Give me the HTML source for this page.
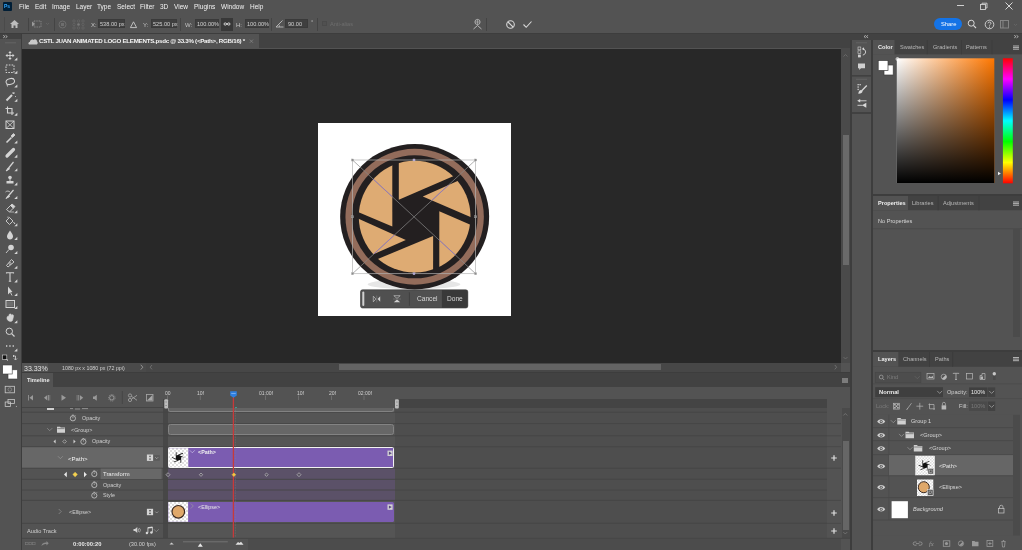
<!DOCTYPE html>
<html><head><meta charset="utf-8">
<style>
*{margin:0;padding:0;box-sizing:border-box}
html,body{width:1022px;height:550px;overflow:hidden;background:#535353;font-family:"Liberation Sans",sans-serif;color:#d6d6d6}
.a{position:absolute}
.t{position:absolute;white-space:nowrap;line-height:1;font-size:6.5px;will-change:transform}
</style></head><body>
<!-- menu bar -->
<div class="a" style="left:0;top:0;width:1022px;height:14px;background:#535353"></div>
<div class="a" style="left:3px;top:2px;width:9px;height:9px;background:#001e36;border-radius:1px"></div>
<div class="t" style="left:4px;top:4px;font-size:5px;color:#31a8ff;font-weight:bold">Ps</div>
<div class="t" style="left:19px;top:3.5px;color:#f2f2f2">File</div>
<div class="t" style="left:35px;top:3.5px;color:#f2f2f2">Edit</div>
<div class="t" style="left:51.5px;top:3.5px;color:#f2f2f2">Image</div>
<div class="t" style="left:76px;top:3.5px;color:#f2f2f2">Layer</div>
<div class="t" style="left:97px;top:3.5px;color:#f2f2f2">Type</div>
<div class="t" style="left:116.5px;top:3.5px;color:#f2f2f2">Select</div>
<div class="t" style="left:140px;top:3.5px;color:#f2f2f2">Filter</div>
<div class="t" style="left:160px;top:3.5px;color:#f2f2f2">3D</div>
<div class="t" style="left:174px;top:3.5px;color:#f2f2f2">View</div>
<div class="t" style="left:194px;top:3.5px;color:#f2f2f2">Plugins</div>
<div class="t" style="left:220.5px;top:3.5px;color:#f2f2f2">Window</div>
<div class="t" style="left:250px;top:3.5px;color:#f2f2f2">Help</div>

<!-- options bar -->
<div class="a" style="left:0;top:14.5px;width:1022px;height:1px;background:#454545"></div>
<div class="a" style="left:0;top:15px;width:1022px;height:18px;background:#535353"></div>
<div class="a" style="left:0;top:33px;width:1022px;height:1px;background:#3d3d3d"></div>


<!-- options content -->
<div class="a" style="left:3.5px;top:17px;width:1px;height:14px;background:#4a4a4a"></div>
<svg class="a" style="left:9px;top:19px" width="11" height="10" viewBox="0 0 11 10"><path d="M5.5 1 L10 5 H8.5 V9 H6.5 V6.5 H4.5 V9 H2.5 V5 H1 Z" fill="#bdbdbd"/></svg>
<div class="a" style="left:28px;top:18px;width:1px;height:13px;background:#444"></div>
<svg class="a" style="left:31px;top:19px" width="20" height="10" viewBox="0 0 20 10"><rect x="3" y="2" width="7" height="6" fill="none" stroke="#8a8a8a" stroke-width="0.9" stroke-dasharray="1.4 0.9"/><path d="M1 2.5 L4 5 L1 7.5Z" fill="#9a9a9a"/><path d="M15 4 L16.5 5.5 L18 4" fill="none" stroke="#6a6a6a" stroke-width="0.7"/></svg>
<div class="a" style="left:54px;top:18px;width:1px;height:13px;background:#444"></div>
<svg class="a" style="left:58px;top:20px" width="10" height="9" viewBox="0 0 10 9"><circle cx="4.5" cy="4.5" r="3.5" fill="none" stroke="#6e6e6e" stroke-width="1"/><rect x="3" y="3" width="3" height="3" fill="#6e6e6e"/></svg>
<svg class="a" style="left:72px;top:19px" width="13" height="11" viewBox="0 0 13 11"><g fill="none" stroke="#6a6a6a" stroke-width="0.6"><circle cx="2" cy="2" r="1.2"/><circle cx="6.5" cy="2" r="1.2"/><circle cx="11" cy="2" r="1.2"/><circle cx="2" cy="5.5" r="1.2"/><circle cx="11" cy="5.5" r="1.2"/><circle cx="2" cy="9" r="1.2"/><circle cx="6.5" cy="9" r="1.2"/><circle cx="11" cy="9" r="1.2"/></g><circle cx="6.5" cy="5.5" r="1.3" fill="#7a7a7a"/></svg>
<div class="t" style="left:91px;top:21.5px;font-size:6px;color:#c4c4c4">X:</div>
<div class="a" style="left:97.5px;top:19px;width:27px;height:9px;background:#3f3f3f;border:1px solid #3a3a3a"></div>
<div class="t" style="left:100px;top:21.8px;font-size:5.6px;color:#d0d0d0">538.00 px</div>
<svg class="a" style="left:129px;top:19.5px" width="9" height="9" viewBox="0 0 9 9"><path d="M4.5 1.8 L7.6 7.6 H1.4 Z" fill="none" stroke="#c8c8c8" stroke-width="0.9"/></svg>
<div class="t" style="left:143px;top:21.5px;font-size:6px;color:#c4c4c4">Y:</div>
<div class="a" style="left:150.5px;top:19px;width:26px;height:9px;background:#3f3f3f;border:1px solid #3a3a3a"></div>
<div class="t" style="left:153px;top:21.8px;font-size:5.6px;color:#d0d0d0">525.00 px</div>
<div class="a" style="left:180px;top:18px;width:1px;height:13px;background:#444"></div>
<div class="t" style="left:185px;top:21.5px;font-size:6px;color:#c4c4c4">W:</div>
<div class="a" style="left:194.5px;top:19px;width:24px;height:9px;background:#3f3f3f;border:1px solid #3a3a3a"></div>
<div class="t" style="left:196.5px;top:21.8px;font-size:5.6px;color:#d0d0d0">100.00%</div>
<div class="a" style="left:221px;top:18px;width:12px;height:12.5px;background:#383838"></div>
<svg class="a" style="left:223px;top:21px" width="8" height="6" viewBox="0 0 8 6"><path d="M4 3 C3 1.5 1 1.5 1 3 C1 4.5 3 4.5 4 3 C5 1.5 7 1.5 7 3 C7 4.5 5 4.5 4 3Z" fill="none" stroke="#e0e0e0" stroke-width="0.9"/></svg>
<div class="t" style="left:236px;top:21.5px;font-size:6px;color:#c4c4c4">H:</div>
<div class="a" style="left:244.5px;top:19px;width:24px;height:9px;background:#3f3f3f;border:1px solid #3a3a3a"></div>
<div class="t" style="left:246.5px;top:21.8px;font-size:5.6px;color:#d0d0d0">100.00%</div>
<div class="a" style="left:271px;top:18px;width:1px;height:13px;background:#444"></div>
<svg class="a" style="left:275px;top:19px" width="9" height="9" viewBox="0 0 9 9"><path d="M1 8 H8.5 M1 8 L7.5 1.5" fill="none" stroke="#bdbdbd" stroke-width="0.9"/><path d="M4.5 8 A3.5 3.5 0 0 0 3.8 5.5" fill="none" stroke="#bdbdbd" stroke-width="0.7"/></svg>
<div class="a" style="left:285px;top:19px;width:23px;height:9px;background:#3f3f3f;border:1px solid #3a3a3a"></div>
<div class="t" style="left:287.5px;top:21.8px;font-size:5.6px;color:#d0d0d0">90.00</div>
<div class="t" style="left:311px;top:20px;font-size:5.6px;color:#bdbdbd">&deg;</div>
<div class="a" style="left:316.5px;top:18px;width:1px;height:13px;background:#444"></div>
<div class="a" style="left:321.5px;top:20.5px;width:5px;height:5px;border:1px solid #4a4a4a;background:#505050"></div>
<div class="t" style="left:329.5px;top:21.5px;font-size:5.6px;color:#6e6e6e">Anti-alias</div>
<svg class="a" style="left:472px;top:18px" width="11" height="12" viewBox="0 0 11 12"><circle cx="5.5" cy="4" r="2.6" fill="none" stroke="#c0c0c0" stroke-width="0.8"/><path d="M3 4 H8 M5.5 1.5 V6.5" stroke="#c0c0c0" stroke-width="0.6"/><path d="M1.5 11 L5.5 7.5 L9.5 11" fill="none" stroke="#c0c0c0" stroke-width="0.9"/></svg>
<div class="a" style="left:485.5px;top:18px;width:1px;height:13px;background:#444"></div>
<svg class="a" style="left:505px;top:18.5px" width="11" height="11" viewBox="0 0 11 11"><circle cx="5.5" cy="5.5" r="3.8" fill="none" stroke="#d8d8d8" stroke-width="1.1"/><path d="M3 3 L8 8" stroke="#d8d8d8" stroke-width="1.1"/></svg>
<svg class="a" style="left:522px;top:18.5px" width="11" height="11" viewBox="0 0 11 11"><path d="M1.5 5.5 L4.2 8.3 L9.5 2.5" fill="none" stroke="#d8d8d8" stroke-width="1.1"/></svg>
<!-- window controls -->
<div class="a" style="left:956.5px;top:5px;width:7px;height:1px;background:#d0d0d0"></div>
<svg class="a" style="left:979px;top:1.5px" width="9" height="9" viewBox="0 0 9 9"><rect x="1.5" y="2.5" width="5" height="5" fill="none" stroke="#d0d0d0" stroke-width="0.9"/><path d="M3 2.5 V1.2 H8 V6 H6.5" fill="none" stroke="#d0d0d0" stroke-width="0.9"/></svg>
<svg class="a" style="left:1003.5px;top:1px" width="10" height="10" viewBox="0 0 10 10"><path d="M1.5 1.5 L8.5 8.5 M8.5 1.5 L1.5 8.5" stroke="#d8d8d8" stroke-width="1"/></svg>
<div class="a" style="left:934px;top:17.5px;width:28px;height:12.5px;background:#1473e6;border-radius:7px"></div>
<div class="t" style="left:940.5px;top:21.6px;font-size:5.8px;color:#fff">Share</div>
<svg class="a" style="left:967px;top:19px" width="10" height="10" viewBox="0 0 10 10"><circle cx="4.2" cy="4.2" r="3" fill="none" stroke="#d8d8d8" stroke-width="1"/><path d="M6.4 6.4 L9 9" stroke="#d8d8d8" stroke-width="1.1"/></svg>
<svg class="a" style="left:984px;top:18.5px" width="11" height="11" viewBox="0 0 11 11"><circle cx="5.5" cy="5.5" r="4.3" fill="none" stroke="#d8d8d8" stroke-width="0.9"/><path d="M4 4.3 C4 2.6 7 2.6 7 4.3 C7 5.3 5.5 5.3 5.5 6.6" fill="none" stroke="#d8d8d8" stroke-width="0.9"/><circle cx="5.5" cy="8.2" r="0.6" fill="#d8d8d8"/></svg>
<svg class="a" style="left:999px;top:19px" width="20" height="11" viewBox="0 0 20 11"><rect x="1.5" y="1.5" width="8" height="7.5" fill="none" stroke="#8a8a8a" stroke-width="0.9"/><path d="M4 1.5 V9" stroke="#8a8a8a" stroke-width="0.9"/><path d="M15 5 L16.5 6.5 L18 5" fill="none" stroke="#6a6a6a" stroke-width="0.7"/></svg>

<!-- toolbar -->
<div class="a" style="left:0;top:34px;width:22px;height:516px;background:#535353"></div>
<div class="a" style="left:0;top:34px;width:21px;height:5px;background:#424242"></div>
<div class="a" style="left:21px;top:34px;width:1px;height:516px;background:#3d3d3d"></div>


<svg class="a" style="left:0;top:0" width="22" height="550" viewBox="0 0 22 550">
<path d="M3.2 35.3 L5 36.6 L3.2 37.9 M5.5 35.3 L7.3 36.6 L5.5 37.9" fill="none" stroke="#d0d0d0" stroke-width="0.7"/>
<path d="M5 42.8 H16" stroke="#6a6a6a" stroke-width="0.8"/>
<g fill="none" stroke="#d4d4d4" stroke-width="1.1">
<!-- move -->
<path d="M10 52 V59 M6.5 55.5 H13.5" stroke-width="0.9"/>
<path d="M10 51 L8.3 53 H11.7Z M10 60 L8.3 58 H11.7Z M5.5 55.5 L7.5 53.8 V57.2Z M14.5 55.5 L12.5 53.8 V57.2Z" fill="#d4d4d4" stroke="none"/>
<path d="M15.6 60.0 L16.8 58.8 V60.0Z" fill="#c8c8c8"/>
<!-- marquee -->
<rect x="6" y="65" width="8" height="7.5" stroke-dasharray="1.6 1.2" stroke-width="1"/>
<path d="M15.6 73.2 L16.8 72.0 V73.2Z" fill="#c8c8c8"/>
<!-- lasso -->
<ellipse cx="10.3" cy="81.5" rx="4.3" ry="2.9" transform="rotate(-15 10.3 81.5)" stroke-width="1"/>
<path d="M7 84 L7.5 86.5" stroke-width="0.9"/>
<path d="M15.6 87.0 L16.8 85.8 V87.0Z" fill="#c8c8c8"/>
<!-- wand -->
<path d="M6.5 100.5 L12 95" stroke-width="2"/>
<path d="M13.5 92.5 V94 M12 93 H15 M15.5 96 V97" stroke-width="0.8"/>
<path d="M15.6 101.3 L16.8 100.1 V101.3Z" fill="#c8c8c8"/>
<!-- crop -->
<path d="M7.5 106.5 V113 H14 M5.5 108.5 H12 V115" stroke-width="1.1"/>
<path d="M15.6 115.2 L16.8 114.0 V115.2Z" fill="#c8c8c8"/>
<!-- frame -->
<rect x="6" y="121" width="8" height="7.5" stroke-width="1"/>
<path d="M6 121 L14 128.5 M14 121 L6 128.5" stroke-width="0.8"/>
<!-- eyedropper -->
<path d="M6.5 142.5 L11.5 137.5" stroke-width="1.6"/>
<path d="M11 136 L13.5 133.5 L15 135 L12.5 137.5Z" fill="#d4d4d4" stroke-width="0.8"/>
<path d="M15.6 143.0 L16.8 141.8 V143.0Z" fill="#c8c8c8"/>
<!-- healing -->
<path d="M7 156 L13.5 149.5" stroke-width="3.2" stroke-linecap="round"/>
<path d="M15.6 157.1 L16.8 155.9 V157.1Z" fill="#c8c8c8"/>
<!-- brush -->
<path d="M7 170 L13.5 162" stroke-width="1.2"/>
<path d="M6 171 L8.5 168 L9.5 169 Z" fill="#d4d4d4" stroke-width="1"/>
<path d="M15.6 170.8 L16.8 169.6 V170.8Z" fill="#c8c8c8"/>
<!-- stamp -->
<circle cx="10" cy="177.5" r="1.8" fill="#d4d4d4" stroke="none"/>
<path d="M10 179 V181" stroke-width="1"/>
<rect x="6.5" y="181" width="7" height="2.5" fill="#d4d4d4" stroke="none"/>
<path d="M15.6 184.9 L16.8 183.7 V184.9Z" fill="#c8c8c8"/>
<!-- history brush -->
<path d="M7 197.5 L13.5 190" stroke-width="1.2"/>
<path d="M6 198.5 L8.5 195.5 L9.5 196.5Z" fill="#d4d4d4" stroke-width="1"/>
<path d="M5.5 192 C7 190.5 9 191 10 192" stroke-width="0.8"/>
<path d="M15.6 198.5 L16.8 197.3 V198.5Z" fill="#c8c8c8"/>
<!-- eraser -->
<path d="M6.5 209.5 L10.5 205.5 L13.5 208 L9.5 212 Z" stroke-width="0.9"/>
<path d="M10.5 205.5 L12 204 L15 206.5 L13.5 208Z" fill="#d4d4d4" stroke-width="0.9"/>
<path d="M9.5 212 H14" stroke-width="0.7"/>
<path d="M15.6 212.7 L16.8 211.5 V212.7Z" fill="#c8c8c8"/>
<!-- bucket -->
<path d="M6 221 L9.5 217.5 L13 221 L9.5 224.5 Z" stroke-width="0.9"/>
<path d="M8 218 L8 216.5" stroke-width="0.8"/>
<path d="M13.5 222 L15 224" stroke-width="1"/>
<path d="M15.6 225.8 L16.8 224.6 V225.8Z" fill="#c8c8c8"/>
<!-- blur -->
<path d="M10 230.5 C8 233.5 7 235 7 236.5 C7 238.5 8.5 239.5 10 239.5 C11.5 239.5 13 238.5 13 236.5 C13 235 12 233.5 10 230.5Z" fill="#d4d4d4" stroke="none"/>
<path d="M15.6 239.4 L16.8 238.2 V239.4Z" fill="#c8c8c8"/>
<!-- dodge -->
<circle cx="11" cy="247.5" r="2.8" fill="#d4d4d4" stroke="none"/>
<path d="M9 249.5 L6 253" stroke-width="0.9"/>
<path d="M15.6 253.5 L16.8 252.3 V253.5Z" fill="#c8c8c8"/>
<!-- pen -->
<path d="M6.5 265.5 L11.5 259.5 L14 262 L8 267Z" stroke-width="0.9"/>
<circle cx="10" cy="263.5" r="1" stroke-width="0.7"/>
<path d="M15.6 268.2 L16.8 267.0 V268.2Z" fill="#c8c8c8"/>
<!-- type -->
<path d="M6.5 273.5 V272.7 H13.5 V273.5 M10 272.7 V281.3 M8.8 281.3 H11.2" stroke-width="1.1"/>
<path d="M15.6 281.9 L16.8 280.7 V281.9Z" fill="#c8c8c8"/>
<!-- path select -->
<path d="M8 286.5 L8 294.5 L10 292.5 L12.5 292 Z" fill="#d4d4d4" stroke="none"/>
<path d="M10.5 292.5 L12 295.5" stroke-width="0.9"/>
<path d="M15.6 295.5 L16.8 294.3 V295.5Z" fill="#c8c8c8"/>
<!-- rect -->
<rect x="6" y="300.5" width="8.5" height="7" stroke-width="1"/>
<rect x="7" y="301.5" width="6.5" height="5" fill="#6e6e6e" stroke="none"/>
<path d="M15.6 308.5 L16.8 307.3 V308.5Z" fill="#c8c8c8"/>
<!-- hand -->
<path d="M7 319 C6.5 316 9 315 9 317 V315 C9 313.5 11.5 313.5 11.5 315 V315.5 C12 314 14 314.5 13.5 316.5 L12.5 320.5 C11.5 322 8.5 322 7 319Z" fill="#d4d4d4" stroke-width="0.5"/>
<path d="M15.6 322.7 L16.8 321.5 V322.7Z" fill="#c8c8c8"/>
<!-- zoom -->
<circle cx="9.3" cy="331.3" r="3.2" stroke-width="1"/>
<path d="M11.7 333.7 L14.5 336.5" stroke-width="1.2"/>
<!-- more -->
<path d="M6 346 H7.3 M9.3 346 H10.6 M12.6 346 H13.9" stroke-width="1.3"/>
<path d="M15.6 351.0 L16.8 349.8 V351.0Z" fill="#c8c8c8"/>
</g>
<!-- default colors -->
<rect x="2.3" y="355" width="4.5" height="4.5" fill="#111" stroke="#d8d8d8" stroke-width="0.6"/>
<path d="M5.5 359.5 H7.5 V361" fill="none" stroke="#d8d8d8" stroke-width="0.6"/>
<path d="M13 356 H15.5 V359.5 M14 358.5 L15.5 360 L17 358.5 M13 356 L14 355 M13 356 L14 357" fill="none" stroke="#d8d8d8" stroke-width="0.8"/>
<rect x="8" y="369.8" width="9.5" height="9.2" fill="#fff" stroke="#3a3a3a" stroke-width="0.6"/>
<rect x="2.7" y="365" width="9.5" height="9" fill="#fff" stroke="#3a3a3a" stroke-width="0.6"/>
<rect x="5.2" y="386.3" width="9.2" height="6.5" fill="none" stroke="#c8c8c8" stroke-width="0.8"/>
<circle cx="9.8" cy="389.5" r="1.8" fill="none" stroke="#8a8a8a" stroke-width="0.9"/>
<rect x="8" y="399.5" width="6.5" height="4" fill="none" stroke="#c8c8c8" stroke-width="0.8"/>
<rect x="5.2" y="402" width="5.3" height="4.5" fill="none" stroke="#c8c8c8" stroke-width="0.8"/>
<path d="M15.6 407.0 L16.8 405.8 V407.0Z" fill="#c8c8c8"/>
</svg>

<!-- doc tab bar -->
<div class="a" style="left:22px;top:34px;width:828px;height:14px;background:#424242"></div>
<div class="a" style="left:22px;top:34px;width:236.5px;height:14px;background:#535353"></div>


<!-- doc tab content -->
<svg class="a" style="left:27.5px;top:37.5px" width="10" height="7" viewBox="0 0 10 7"><path d="M1.5 6.5 C0 6.5 0 4 1.8 4 C2 2 4 1 5.5 2 C6.5 0.5 9 1 9 3.5 C10 3.8 10 6.5 8.5 6.5 Z" fill="#c8c8c8"/></svg>
<div class="t" style="left:39px;top:37.9px;font-size:6.2px;font-weight:bold;letter-spacing:-0.27px;color:#f4f4f4">CSTL JUAN ANIMATED LOGO ELEMENTS.psdc @ 33.3% (&lt;Path&gt;, RGB/16) *</div>
<svg class="a" style="left:248px;top:38px" width="7" height="7" viewBox="0 0 7 7"><path d="M1.8 1.6 L5 4.8 M5 1.6 L1.8 4.8" stroke="#8a8a8a" stroke-width="0.7"/></svg>

<!-- canvas -->
<div class="a" style="left:22px;top:48.7px;width:819px;height:314.3px;background:#282828"></div>
<div class="a" style="left:318px;top:123px;width:193px;height:193px;background:#fff"></div>


<svg class="a" style="left:0;top:0" width="1022" height="550" viewBox="0 0 1022 550">
<defs><clipPath id="tc"><circle cx="414.65" cy="216.7" r="55.85"/></clipPath>
<clipPath id="bl"><path d="M392.3 226.6 L392.3 140 L330 140 L330 199.9Z"/><path d="M398.8 199.8 L398.8 140 L500 140 L500 156Z"/><path d="M422.8 196.6 L500 162.2 L500 229.5Z"/><path d="M439.3 211.3 L500 237.4 L500 300 L439.3 300Z"/><path d="M433.1 236 L433.1 300 L330 300 L330 278.9Z"/><path d="M405.8 240.1 L330 273.3 L330 205.8Z"/></clipPath></defs>
<ellipse cx="414" cy="284.3" rx="46.5" ry="5" fill="#e6e6e6"/>
<ellipse cx="414.65" cy="216.75" rx="74.5" ry="72.65" fill="#231f20"/>
<ellipse cx="414.65" cy="216.75" rx="69.2" ry="67.9" fill="#936c5b"/>
<ellipse cx="414.65" cy="216.75" rx="62.9" ry="61.6" fill="#231f20"/>
<g clip-path="url(#tc)" fill="#deab73">
<path d="M392.3 226.6 L392.3 140 L330 140 L330 199.9Z"/>
<path d="M398.8 199.8 L398.8 140 L500 140 L500 156Z"/>
<path d="M422.8 196.6 L500 162.2 L500 229.5Z"/>
<path d="M439.3 211.3 L500 237.4 L500 300 L439.3 300Z"/>
<path d="M433.1 236 L433.1 300 L330 300 L330 278.9Z"/>
<path d="M405.8 240.1 L330 273.3 L330 205.8Z"/>
</g>
<!-- bbox -->
<g fill="none" stroke-width="0.7">
<path d="M352.5 160 L475.6 273.7 M475.6 160 L352.5 273.7" stroke="#8a8a8a"/>
<g clip-path="url(#tc)"><g clip-path="url(#bl)"><path d="M352.5 160 L475.6 273.7 M475.6 160 L352.5 273.7" stroke="#8c6fd0"/></g></g>
<rect x="352.5" y="160" width="123.1" height="113.7" stroke="#b4b4b4"/>
</g>
<g fill="#8c8c8c" stroke="#b0b0b0" stroke-width="0.3">
<rect x="351.45" y="158.95" width="2.1" height="2.1"/>
<rect x="474.55" y="158.95" width="2.1" height="2.1"/>
<rect x="351.45" y="272.65" width="2.1" height="2.1"/>
<rect x="474.55" y="272.65" width="2.1" height="2.1"/>
<rect x="351.45" y="215.75" width="2.1" height="2.1"/>
<rect x="474.55" y="215.75" width="2.1" height="2.1"/>
</g>
<g fill="#b0a0d8" stroke="#c8c8c8" stroke-width="0.3">
<rect x="412.95" y="158.95" width="2.1" height="2.1"/>
<rect x="412.95" y="272.65" width="2.1" height="2.1"/>
</g>
<!-- popup toolbar -->
<rect x="360.5" y="289.8" width="107.3" height="18.2" rx="2" fill="#505050" stroke="#3a3a3a" stroke-width="0.6"/>
<path d="M441.9 290.1 H465.8 A1.8 1.8 0 0 1 467.6 291.9 V305.9 A1.8 1.8 0 0 1 465.8 307.7 H441.9Z" fill="#393939"/>
<rect x="362.3" y="291.6" width="2" height="14.4" rx="1" fill="#d0d0d0"/>
<path d="M409.4 292.3 V305.8" stroke="#3a3a3a" stroke-width="0.7"/>
<path d="M373.3 296.2 L375.9 299 L373.3 301.8Z" fill="none" stroke="#d0d0d0" stroke-width="0.6"/>
<path d="M380.2 296.2 L377.6 299 L380.2 301.8Z" fill="#d0d0d0"/>
<path d="M376.75 295.5 V302.5" stroke="#9a9a9a" stroke-width="0.4"/>
<path d="M393.8 295.7 H400.2 L397 298.4Z" fill="none" stroke="#d0d0d0" stroke-width="0.6"/>
<path d="M393.8 302.3 H400.2 L397 299.6Z" fill="#d0d0d0"/>
<path d="M393 299 H401" stroke="#9a9a9a" stroke-width="0.4"/>
</svg>
<div class="t" style="left:416.8px;top:295.8px;font-size:6.6px;color:#d8d8d8">Cancel</div>
<div class="t" style="left:446.8px;top:295.8px;font-size:6.6px;color:#d8d8d8">Done</div>

<!-- canvas v scrollbar -->
<div class="a" style="left:841px;top:48px;width:9px;height:315px;background:#4a4a4a"></div>
<div class="a" style="left:842.5px;top:135px;width:6px;height:130px;background:#6a6a6a"></div>

<!-- status bar -->
<div class="a" style="left:22px;top:363px;width:828px;height:9px;background:#535353"></div>
<div class="a" style="left:22px;top:372px;width:828px;height:1px;background:#3d3d3d"></div>

<!-- timeline tab bar -->
<div class="a" style="left:22px;top:373px;width:828px;height:14px;background:#424242"></div>
<div class="a" style="left:22px;top:373px;width:31px;height:14px;background:#535353"></div>



<!-- status bar content -->
<div class="t" style="left:24.3px;top:364.5px;font-size:7px;color:#e0e0e0">33.33%</div>
<div class="a" style="left:48.2px;top:363px;width:98px;height:8.7px;background:#4a4a4a"></div>
<div class="t" style="left:61.5px;top:366px;font-size:5.3px;color:#cfcfcf">1080 px x 1080 px (72 ppi)</div>
<div class="a" style="left:146px;top:363px;width:695px;height:8.7px;background:#474747"></div>
<div class="a" style="left:338.7px;top:364.2px;width:322.5px;height:6.3px;background:#646464"></div>
<div class="a" style="left:841px;top:363px;width:9px;height:9px;background:#535353"></div>
<svg class="a" style="left:0;top:0" width="1022" height="550" viewBox="0 0 1022 550">
<path d="M140.8 364.8 L142.8 367.2 L140.8 369.6" fill="none" stroke="#b0b0b0" stroke-width="0.7"/>
<path d="M152 365 L150.2 367.2 L152 369.4" fill="none" stroke="#8a8a8a" stroke-width="0.6"/>
<path d="M834.8 365 L836.6 367.2 L834.8 369.4" fill="none" stroke="#8a8a8a" stroke-width="0.6"/>
<path d="M843.5 56.5 L845.5 54.5 L847.5 56.5" fill="none" stroke="#7a7a7a" stroke-width="0.6"/>
<path d="M843.5 357 L845.5 359 L847.5 357" fill="none" stroke="#7a7a7a" stroke-width="0.6"/>
</svg>

<!-- TIMELINE -->
<div class="t" style="left:26.8px;top:378.2px;font-size:5.6px;font-weight:bold;color:#e8e8e8">Timeline</div>
<div class="a" style="left:842px;top:378px;width:5.5px;height:4.8px;background:#7c7c7c"></div>
<!-- controls row -->
<div class="a" style="left:22px;top:387px;width:141px;height:20.5px;background:#535353;border-bottom:1px solid #444"></div>
<!-- ruler -->
<div class="a" style="left:163px;top:387px;width:687px;height:12px;background:#535353"></div>
<div class="a" style="left:163px;top:399px;width:664px;height:9.5px;background:#444444"></div>
<div class="a" style="left:827px;top:399px;width:23px;height:9.5px;background:#535353"></div>
<div class="a" style="left:166px;top:399px;width:230px;height:9.5px;background:#535353"></div>
<!-- list column -->
<div class="a" style="left:22px;top:408px;width:141px;height:130px;background:#535353"></div>
<div class="a" style="left:22px;top:447px;width:141px;height:21px;background:#676767"></div>
<div class="a" style="left:163px;top:408px;width:4.5px;height:130px;background:#474747"></div>
<!-- track area -->
<div class="a" style="left:167.5px;top:408px;width:659.5px;height:130px;background:#4e4e4e"></div>
<div class="a" style="left:167.5px;top:408px;width:227px;height:130px;background:#555555"></div>
<div class="a" style="left:167.5px;top:468px;width:227px;height:32px;background:#5b5168"></div>
<div class="a" style="left:827px;top:408px;width:14.5px;height:130px;background:#535353"></div>
<div class="a" style="left:841.5px;top:408px;width:8.5px;height:130px;background:#4a4a4a"></div>
<div class="a" style="left:843px;top:441px;width:5.8px;height:88.5px;background:#666"></div>
<!-- row separators -->
<svg class="a" style="left:0;top:0" width="1022" height="550" viewBox="0 0 1022 550">
<g stroke="#454545" stroke-width="0.9">
<path d="M22 412.2 H827 M22 423.6 H827 M22 435.8 H827 M22 446.7 H827 M22 468.2 H827 M22 479.3 H827 M22 490 H827 M22 500.4 H827 M22 523.3 H827 M22 538.4 H850"/>
</g>
<g stroke="#474747" stroke-width="0.9"><path d="M827 423.6 H841 M827 435.8 H841 M827 446.7 H841 M827 468.2 H841 M827 500.4 H841 M827 523.3 H841"/></g>
</svg>
<!-- bottom bar -->
<div class="a" style="left:22px;top:538.8px;width:226px;height:11.2px;background:#535353"></div>
<div class="a" style="left:248px;top:538.8px;width:593px;height:11.2px;background:#4c4c4c"></div>
<div class="a" style="left:841px;top:538.8px;width:9px;height:11.2px;background:#535353"></div>
<!-- bars -->
<div class="a" style="left:168px;top:408.3px;width:226px;height:3.9px;background:#646464;border:1px solid #828282;border-top:none;border-radius:0 0 2.5px 2.5px"></div>
<div class="a" style="left:168px;top:424.4px;width:226px;height:10.6px;background:#676767;border:1px solid #838383;border-radius:2.5px"></div>
<div class="a" style="left:168px;top:447.3px;width:226px;height:20.7px;background:#7b5cb1;border:1px solid #f2f2f2;border-radius:1.5px"></div>
<div class="a" style="left:168px;top:501.5px;width:226px;height:20.8px;background:#7b5cb1;border-radius:1.5px"></div>


<svg class="a" style="left:0;top:0" width="1022" height="550" viewBox="0 0 1022 550">
<defs><pattern id="chk" width="4" height="4" patternUnits="userSpaceOnUse"><rect width="4" height="4" fill="#fff"/><rect width="2" height="2" fill="#e0e0e0"/><rect x="2" y="2" width="2" height="2" fill="#e0e0e0"/></pattern></defs>
<!-- controls -->
<g fill="#9a9a9a" stroke="#9a9a9a">
<path d="M28.5 395 V400.5" stroke-width="0.8"/><path d="M33 395 L29.5 397.8 L33 400.5Z" stroke="none"/>
<path d="M44 397.8 L47.3 395 V400.5Z" stroke="none"/><path d="M48.5 395 V400.5" stroke-width="0.8"/><path d="M49.8 395 V400.5" stroke-width="0.5"/>
<path d="M61.5 394.8 L66 397.8 L61.5 400.8Z" stroke="none"/>
<path d="M77 395 V400.5" stroke-width="0.5"/><path d="M78.3 395 V400.5" stroke-width="0.8"/><path d="M79.8 395 L83.2 397.8 L79.8 400.5Z" stroke="none"/>
<path d="M93 396.5 H94.5 L96.8 394.8 V400.8 L94.5 399.1 H93Z" stroke="none"/>
<circle cx="111.8" cy="397.8" r="2.2" fill="none" stroke-width="1"/><circle cx="111.8" cy="397.8" r="3.3" fill="none" stroke-width="0.8" stroke-dasharray="1 1"/>
</g>
<path d="M122.4 391 V404" stroke="#444" stroke-width="0.8"/>
<g fill="none" stroke="#a8a8a8" stroke-width="0.8">
<circle cx="130" cy="400" r="1.6"/><circle cx="130" cy="395.5" r="1.6"/><path d="M131.4 399.2 L137 395.3 M131.4 396.3 L137 400.3"/>
<rect x="146.5" y="394.5" width="6.5" height="6.5"/>
</g>
<path d="M147 400.5 L152.5 395 V400.5Z" fill="#a8a8a8"/>
<!-- ruler labels ticks -->
<g stroke="#8a8a8a" stroke-width="0.5">
<path d="M167.5 395.5 V399 M200.3 395.5 V400 M265.5 395.5 V400 M298.5 395.5 V400 M331.5 395.5 V400 M364 395.5 V400"/>
</g>
<!-- work area handles -->
<rect x="164.3" y="399.3" width="3.8" height="9.2" rx="1" fill="#bdbdbd"/>
<rect x="395" y="399.3" width="3.8" height="9.2" rx="1" fill="#bdbdbd"/>
<path d="M165.3 402 H167 M165.3 405.5 H167 M396 402 H397.7 M396 405.5 H397.7" stroke="#777" stroke-width="0.6"/>
<path d="M235 407.5 H237" stroke="#3fb8a8" stroke-width="0.7"/>
<!-- list content -->
<rect x="47" y="408" width="7" height="2" fill="#d0d0d0"/><path d="M70 408.6 H73 M75 409 H80 M82 408.6 H88" stroke="#a0a0a0" stroke-width="0.8"/>
<circle cx="72.9" cy="418.3" r="2.6" fill="none" stroke="#d0d0d0" stroke-width="0.75"/><path d="M72.9 418.3 V416.8 M71.9 415.1 H73.9 M74.9 415.8 L75.60000000000001 415.1" stroke="#d0d0d0" stroke-width="0.6"/>
<path d="M47.2 428.2 L49.7 430.7 L52.2 428.2" fill="none" stroke="#a0a0a0" stroke-width="0.6"/><path d="M57 426.8 H60 L60.8 427.6 H65 V432.8 H57 Z" fill="#d0d0d0"/><path d="M57.4 428.6 H64.6" stroke="#535353" stroke-width="0.6"/>
<path d="M53.5 441.5 L55.6 439.5 V443.5Z" fill="#d0d0d0"/><path d="M64.6 439.7 L66.39999999999999 441.5 L64.6 443.3 L62.8 441.5Z" fill="none" stroke="#d0d0d0" stroke-width="0.6"/><path d="M73.5 439.5 L75.6 441.5 L73.5 443.5Z" fill="#d0d0d0"/>
<circle cx="83.4" cy="441.7" r="2.6" fill="none" stroke="#d0d0d0" stroke-width="0.75"/><path d="M83.4 441.7 V440.2 M82.4 438.5 H84.4 M85.4 439.2 L86.10000000000001 438.5" stroke="#d0d0d0" stroke-width="0.6"/>
<path d="M57.9 456.2 L60.4 458.7 L62.9 456.2" fill="none" stroke="#a0a0a0" stroke-width="0.6"/>
<rect x="146.9" y="454.5" width="6.2" height="6.4" fill="#d4d4d4"/><rect x="149.2" y="455.7" width="1.6" height="1.4" fill="#676767"/><rect x="149.2" y="458.4" width="1.6" height="1.4" fill="#676767"/><rect x="153.6" y="455.1" width="6.2" height="5.6" fill="#5a5a5a"/><path d="M155.2 457.2 L156.7 458.7 L158.2 457.2" fill="none" stroke="#c0c0c0" stroke-width="0.6"/>
<rect x="100.6" y="468.6" width="61" height="10.5" fill="#686868"/>
<path d="M64 474.5 L66.8 471.8 V477.2Z" fill="#e8e8e8"/><path d="M75.1 472.3 L77.3 474.5 L75.1 476.7 L72.9 474.5Z" fill="#f5d250" stroke="#f5d250" stroke-width="0.6"/><path d="M84 471.8 L86.8 474.5 L84 477.2Z" fill="#e8e8e8"/>
<circle cx="94.3" cy="474.0" r="2.6" fill="none" stroke="#d0d0d0" stroke-width="0.75"/><path d="M94.3 474.0 V472.5 M93.3 470.8 H95.3 M96.3 471.5 L97.0 470.8" stroke="#d0d0d0" stroke-width="0.6"/><circle cx="94.3" cy="485.0" r="2.6" fill="none" stroke="#d0d0d0" stroke-width="0.75"/><path d="M94.3 485.0 V483.5 M93.3 481.8 H95.3 M96.3 482.5 L97.0 481.8" stroke="#d0d0d0" stroke-width="0.6"/><circle cx="94.3" cy="495.5" r="2.6" fill="none" stroke="#d0d0d0" stroke-width="0.75"/><path d="M94.3 495.5 V494 M93.3 492.3 H95.3 M96.3 493 L97.0 492.3" stroke="#d0d0d0" stroke-width="0.6"/>
<path d="M58.699999999999996 509.0 L61.199999999999996 511.5 L58.699999999999996 514.0" fill="none" stroke="#a0a0a0" stroke-width="0.6"/>
<rect x="146.9" y="508.8" width="6.2" height="6.4" fill="#d4d4d4"/><rect x="149.2" y="510.0" width="1.6" height="1.4" fill="#535353"/><rect x="149.2" y="512.7" width="1.6" height="1.4" fill="#535353"/><path d="M155.2 511.5 L156.7 513 L158.2 511.5" fill="none" stroke="#c0c0c0" stroke-width="0.6"/>
<path d="M133.5 529 H135 L137.3 527 V533 L135 531 H133.5Z" fill="#d0d0d0"/><ellipse cx="139.3" cy="530.2" rx="1" ry="1.8" fill="none" stroke="#d0d0d0" stroke-width="0.6"/>
<path d="M147.9 533 V527.6 L152.4 527.1 V532.5" fill="none" stroke="#d8d8d8" stroke-width="0.8"/><path d="M147.9 527.9 L152.4 527.4" stroke="#d8d8d8" stroke-width="1.2"/><circle cx="146.9" cy="533" r="1.2" fill="#d8d8d8"/><circle cx="151.4" cy="532.5" r="1.2" fill="#d8d8d8"/><path d="M153.8 529.2 L156.3 531.7 L158.8 529.2" fill="none" stroke="#a0a0a0" stroke-width="0.6"/>
<!-- bottom bar -->
<g fill="none" stroke="#7a7a7a" stroke-width="0.6"><rect x="25.5" y="542.5" width="2.6" height="2.2"/><rect x="29" y="542.5" width="2.6" height="2.2"/><rect x="32.5" y="542.5" width="2.6" height="2.2"/></g>
<path d="M41.5 546 C42 543 44 542.5 46.5 542.5 V541 L48.7 543.3 L46.5 545.5 V544 C44.5 544 43 544.5 41.5 546Z" fill="#8a8a8a"/>
<path d="M169.5 544.5 L171.5 542.5 L173.8 544.5Z" fill="#cfcfcf"/>
<path d="M183 541.8 H227.8" stroke="#777" stroke-width="0.9"/>
<path d="M197.8 546.8 L200.3 543.3 L202.8 546.8Z" fill="#e8e8e8"/>
<path d="M235.5 544.8 L238 542 L239.5 543 L241 541.8 L243.5 544.8Z" fill="#e0e0e0"/>
<!-- playhead -->
<path d="M233.4 397 V537.5" stroke="#c73a3a" stroke-width="1.3"/>
<path d="M235.4 408.5 V537" stroke="#8a8a8a" stroke-width="0.4" stroke-dasharray="0.8 0.8"/>
<path d="M230.2 391.2 H236.8 V395.5 L233.5 397.8 L230.2 395.5Z" fill="#2d7fe0"/>
<path d="M231.3 393.5 H235.7" stroke="#bcd8ff" stroke-width="0.5"/>
<!-- keyframes -->
<path d="M168 472.70 L170 474.70 L168 476.70 L166 474.70Z" fill="#585260" stroke="#cfcfcf" stroke-width="0.6"/><path d="M201 473.00 L202.7 474.70 L201 476.40 L199.3 474.70Z" fill="#585260" stroke="#cfcfcf" stroke-width="0.6"/><path d="M266.5 473.00 L268.2 474.70 L266.5 476.40 L264.8 474.70Z" fill="#585260" stroke="#cfcfcf" stroke-width="0.6"/><path d="M299 472.70 L301 474.70 L299 476.70 L297 474.70Z" fill="#585260" stroke="#cfcfcf" stroke-width="0.6"/>
<path d="M233.9 472.90 L235.70000000000002 474.70 L233.9 476.50 L232.1 474.70Z" fill="#f5c842" stroke="#f5c842" stroke-width="0.6"/>
<!-- thumbnails -->
<rect x="168.8" y="448.2" width="19.5" height="19" fill="url(#chk)"/>
<g transform="translate(178.5 457.7) scale(0.115) translate(-415.9 -218.4)"><path d="M392.3 226.6 L392.3 170 L398.8 170 L398.8 199.8 L452.8 176.4 L457.2 181.3 L422.8 196.6 L471.4 217.3 L439.3 211.3 L439.3 265 L433.1 265 L433.1 236 L377.9 259 L372.5 254.7 L405.8 240.1 L358.3 218.6 L358.3 211.8Z" fill="#111"/></g>
<rect x="168.3" y="502" width="19.8" height="19.8" fill="url(#chk)"/>
<circle cx="178.3" cy="511.8" r="6.3" fill="#dfa86a" stroke="#3a2a22" stroke-width="1.2"/>
<!-- bar labels -->
<path d="M189.8 450.3 L192.3 452.8 L194.8 450.3" fill="none" stroke="#d8d0f0" stroke-width="0.6"/>
<path d="M190.8 503.5 L193.3 506 L190.8 508.5" fill="none" stroke="#a0a0a0" stroke-width="0.6"/>
<path d="M387.5 450.6 H392.6 V456 H387.5Z" fill="#d4d4d4"/><path d="M388.9 451.6 L391.8 453.3 L388.9 455Z" fill="#5a4a80"/>
<path d="M387.5 504.4 H392.6 V509.8 H387.5Z" fill="#d4d4d4"/><path d="M388.9 505.4 L391.8 507.1 L388.9 508.8Z" fill="#5a4a80"/>
<!-- plus -->
<path d="M831.2 458 H836.8 M834 455.2 V460.8" stroke="#e0e0e0" stroke-width="1.2"/><path d="M831.2 513 H836.8 M834 510.2 V515.8" stroke="#e0e0e0" stroke-width="1.2"/><path d="M831.2 531 H836.8 M834 528.2 V533.8" stroke="#e0e0e0" stroke-width="1.2"/>
<path d="M843.3 415.5 L845.3 413.5 L847.3 415.5" fill="none" stroke="#8a8a8a" stroke-width="0.6"/>
<path d="M843.3 532 L845.3 534 L847.3 532" fill="none" stroke="#8a8a8a" stroke-width="0.6"/>
</svg>
<div class="t" style="left:165px;top:390.5px;font-size:5px;color:#d0d0d0">00</div>
<div class="t" style="left:197px;top:390.5px;font-size:5px;color:#d0d0d0">10f</div>
<div class="t" style="left:259px;top:390.5px;font-size:5px;color:#d0d0d0">01:00f</div>
<div class="t" style="left:296.5px;top:390.5px;font-size:5px;color:#d0d0d0">10f</div>
<div class="t" style="left:328.5px;top:390.5px;font-size:5px;color:#d0d0d0">20f</div>
<div class="t" style="left:357.5px;top:390.5px;font-size:5px;color:#d0d0d0">02:00f</div>
<div class="t" style="left:81.5px;top:416.4px;font-size:5.4px;color:#d0d0d0">Opacity</div>
<div class="t" style="left:71px;top:428.2px;font-size:5.4px;color:#d0d0d0">&lt;Group&gt;</div>
<div class="t" style="left:92px;top:439.4px;font-size:5.4px;color:#d0d0d0">Opacity</div>
<div class="t" style="left:68px;top:455.6px;font-size:6.1px;color:#f4f4f4">&lt;Path&gt;</div>
<div class="t" style="left:103.3px;top:472.3px;font-size:5.9px;color:#ececec">Transform</div>
<div class="t" style="left:103px;top:482.5px;font-size:5.4px;color:#d0d0d0">Opacity</div>
<div class="t" style="left:103px;top:493.3px;font-size:5.4px;color:#d0d0d0">Style</div>
<div class="t" style="left:68.5px;top:510.3px;font-size:5.4px;color:#d0d0d0">&lt;Ellipse&gt;</div>
<div class="t" style="left:27px;top:528.8px;font-size:5.6px;color:#d0d0d0">Audio Track</div>
<div class="t" style="left:72.8px;top:541.5px;font-size:5.8px;color:#e8e8e8;font-weight:bold">0:00:00:20</div>
<div class="t" style="left:128.8px;top:541.5px;font-size:5.6px;color:#d0d0d0">(30.00 fps)</div>
<div class="t" style="left:197.5px;top:450px;font-size:5.4px;color:#f0f0f0;font-weight:bold">&lt;Path&gt;</div>
<div class="t" style="left:198.3px;top:505.2px;font-size:5.4px;color:#e8e8e8">&lt;Ellipse&gt;</div>

<!-- right dividers -->
<div class="a" style="left:850px;top:34px;width:2px;height:516px;background:#3d3d3d"></div>
<div class="a" style="left:871px;top:34px;width:2px;height:516px;background:#3d3d3d"></div>
<div class="a" style="left:850px;top:34px;width:172px;height:6px;background:#424242"></div>


<div class="a" style="left:873px;top:194px;width:149px;height:2px;background:#3d3d3d"></div>
<div class="a" style="left:873px;top:350px;width:149px;height:2px;background:#3d3d3d"></div>
<!-- icon column -->
<div class="a" style="left:852px;top:40px;width:19px;height:510px;background:#535353"></div>
<svg class="a" style="left:0;top:0" width="1022" height="550" viewBox="0 0 1022 550">
<defs><pattern id="chk2" width="3" height="3" patternUnits="userSpaceOnUse"><rect width="3" height="3" fill="#fff"/><rect width="1.5" height="1.5" fill="#dcdcdc"/><rect x="1.5" y="1.5" width="1.5" height="1.5" fill="#dcdcdc"/></pattern>
<linearGradient id="hue" x1="0" y1="0" x2="0" y2="1"><stop offset="0" stop-color="#f00"/><stop offset="0.1667" stop-color="#f0f"/><stop offset="0.3333" stop-color="#00f"/><stop offset="0.5" stop-color="#0ff"/><stop offset="0.6667" stop-color="#0f0"/><stop offset="0.8333" stop-color="#ff0"/><stop offset="1" stop-color="#f00"/></linearGradient>
<linearGradient id="wh" x1="0" y1="0" x2="1" y2="0"><stop offset="0" stop-color="#fff"/><stop offset="1" stop-color="#ff7700"/></linearGradient>
<linearGradient id="bk" x1="0" y1="0" x2="0" y2="1"><stop offset="0" stop-color="#000" stop-opacity="0"/><stop offset="1" stop-color="#000"/></linearGradient>
</defs>
<path d="M852 75.8 H871 M852 113 H871" stroke="#3d3d3d" stroke-width="1.3"/>
<path d="M856 42.8 H867 M856 79.3 H867" stroke="#6a6a6a" stroke-width="0.7"/>
<path d="M865.8 35.3 L864 36.6 L865.8 37.9 M868.1 35.3 L866.3 36.6 L868.1 37.9" fill="none" stroke="#d0d0d0" stroke-width="0.7"/>
<path d="M1014.2 35.3 L1016 36.6 L1014.2 37.9 M1016.5 35.3 L1018.3 36.6 L1016.5 37.9" fill="none" stroke="#d0d0d0" stroke-width="0.7"/>
<!-- history icon -->
<g fill="#d0d0d0"><rect x="858" y="47" width="2.8" height="2.8" fill="none" stroke="#d0d0d0" stroke-width="0.6"/><rect x="858" y="50.8" width="2.8" height="2.8" fill="none" stroke="#d0d0d0" stroke-width="0.6"/><rect x="858" y="54.6" width="2.8" height="2.8"/></g>
<path d="M863 49 C866.5 49.5 866.5 54.5 862.8 55" fill="none" stroke="#d8d8d8" stroke-width="0.9"/><path d="M861.8 49 L864 47.3 L864.2 50.2Z" fill="#d8d8d8"/>
<!-- comment icon -->
<path d="M858 63.5 H865 V68.3 H861 L859.2 70 V68.3 H858Z" fill="#d0d0d0"/>
<!-- brush presets -->
<g fill="#d0d0d0"><rect x="857.5" y="84" width="1.3" height="1.3"/><rect x="857.5" y="86.4" width="1.3" height="1.3"/><rect x="857.5" y="88.8" width="1.3" height="1.3"/><rect x="859.5" y="84" width="1.3" height="1.3"/></g>
<path d="M861.5 91 L866.8 85.5" stroke="#d8d8d8" stroke-width="1.3"/><path d="M858.3 93.8 C858.5 91.5 859.5 90 861.2 90 L862.5 91.3 C862.5 93 860.5 94 858.3 93.8Z" fill="#d8d8d8"/>
<!-- sliders icon -->
<path d="M859.5 100.8 H866.5 M857.5 105.3 H862.5" stroke="#d8d8d8" stroke-width="0.9"/><path d="M857.2 100.8 L860.2 99 V102.6Z" fill="#d8d8d8"/><path d="M862 105.3 L866.3 102.8 V107.8Z" fill="#d8d8d8"/>

<!-- color panel tabs -->
<rect x="873" y="40" width="149" height="14.6" fill="#424242"/>
<rect x="873" y="40" width="21.5" height="14.6" fill="#535353"/>
<path d="M927.3 40 V54.6 M961.5 40 V54.6 M992 40 V54.6" stroke="#3a3a3a" stroke-width="0.7"/>
<path d="M1013 46 H1019 M1013 47.6 H1019 M1013 49.2 H1019" stroke="#c0c0c0" stroke-width="0.9"/>
<rect x="873" y="54.6" width="149" height="139.4" fill="#535353"/>
<rect x="884" y="65" width="9.2" height="10" fill="#fff" stroke="#3c3c3c" stroke-width="0.7"/>
<rect x="878.2" y="60.5" width="9.8" height="10" fill="#fff" stroke="#3c3c3c" stroke-width="0.7"/>
<rect x="896.8" y="58.3" width="97.5" height="124.7" fill="url(#wh)"/>
<rect x="896.8" y="58.3" width="97.5" height="124.7" fill="url(#bk)"/>
<circle cx="897.5" cy="59" r="1.5" fill="none" stroke="#fff" stroke-width="0.7"/>
<rect x="1002.9" y="58.3" width="9.9" height="125" fill="url(#hue)"/>
<path d="M998 171.8 L1000.8 173.5 L998 175.2Z" fill="#f0f0f0"/>
<!-- properties -->
<rect x="873" y="196" width="149" height="14.3" fill="#424242"/>
<rect x="873" y="196" width="35" height="14.3" fill="#535353"/>
<path d="M938.2 196 V210.3 M979 196 V210.3" stroke="#3a3a3a" stroke-width="0.7"/>
<path d="M1013 202 H1019 M1013 203.6 H1019 M1013 205.2 H1019" stroke="#c0c0c0" stroke-width="0.9"/>
<path d="M873 228.8 H1022" stroke="#474747" stroke-width="0.8"/>
<rect x="1013" y="229" width="7" height="108" fill="#4b4b4b"/>
<!-- layers -->
<rect x="873" y="352" width="149" height="14.8" fill="#424242"/>
<rect x="873" y="352" width="25.3" height="14.8" fill="#535353"/>
<path d="M929.5 352 V366.8 M952.6 352 V366.8" stroke="#3a3a3a" stroke-width="0.7"/>
<path d="M1013 357.5 H1019 M1013 359.1 H1019 M1013 360.7 H1019" stroke="#c0c0c0" stroke-width="0.9"/>
<rect x="875.2" y="372.3" width="45.7" height="10.5" fill="#4d4d4d" stroke="#474747" stroke-width="0.6"/>
<circle cx="881.2" cy="377" r="1.9" fill="none" stroke="#a8a8a8" stroke-width="0.7"/><path d="M882.6 378.4 L884.2 380" stroke="#a8a8a8" stroke-width="0.8"/>
<path d="M914.8 376.2 L917.3 378.7 L919.8 376.2" fill="none" stroke="#6a6a6a" stroke-width="0.6"/>
<rect x="927" y="373.5" width="7" height="5.5" fill="none" stroke="#b8b8b8" stroke-width="0.7"/><path d="M928 378 L929.5 376 L931 377.2 L932.5 375.8 L933.3 378Z" fill="#b8b8b8"/>
<circle cx="943.8" cy="376.8" r="2.6" fill="none" stroke="#b8b8b8" stroke-width="0.7"/><path d="M941.9 378.7 L945.7 374.9 A2.6 2.6 0 0 1 941.9 378.7Z" fill="#b8b8b8"/>
<path d="M953.3 374 V373.3 H958.7 V374 M956 373.3 V379.5 M955 379.5 H957" fill="none" stroke="#b8b8b8" stroke-width="0.8"/>
<rect x="966.5" y="373.5" width="6" height="5.5" fill="none" stroke="#b8b8b8" stroke-width="0.7"/>
<path d="M980 379.5 V375.5 H982 V373.5 H985 V379.5Z" fill="none" stroke="#b8b8b8" stroke-width="0.7"/><rect x="980.5" y="376.5" width="2.5" height="2.5" fill="#b8b8b8"/>
<circle cx="994.3" cy="373.8" r="1.7" fill="#c8c8c8"/><rect x="993" y="376" width="2.6" height="4" fill="#4a4a4a"/>
<path d="M873 383.8 H1022 M873 398.6 H1022" stroke="#4a4a4a" stroke-width="0.7"/>
<rect x="875.2" y="387.2" width="67.8" height="9.9" fill="#3f3f3f"/>
<path d="M937.2 390.9 L939.7 393.4 L942.2 390.9" fill="none" stroke="#c0c0c0" stroke-width="0.6"/>
<rect x="969" y="387.4" width="18.5" height="9.5" fill="#3f3f3f"/>
<rect x="988" y="387.4" width="7.2" height="9.5" fill="#424242"/><path d="M989.1 390.9 L991.6 393.4 L994.1 390.9" fill="none" stroke="#c0c0c0" stroke-width="0.6"/>
<rect x="969" y="401.5" width="18.5" height="9.5" fill="#4a4a4a"/>
<rect x="988" y="401.5" width="7.2" height="9.5" fill="#424242"/><path d="M989.1 404.9 L991.6 407.4 L994.1 404.9" fill="none" stroke="#c0c0c0" stroke-width="0.6"/>
<!-- lock icons -->
<g fill="none" stroke="#b8b8b8" stroke-width="0.7">
<rect x="893.5" y="403.3" width="5.8" height="5.8"/>
<path d="M907 409.3 L911.5 403.2"/>
<path d="M919.8 402.8 V409.6 M916.4 406.2 H923.2"/>
<path d="M929.5 403.5 V408.8 H935 M928.5 404.5 H934 V410" />
</g>
<g fill="#b8b8b8"><rect x="894.1" y="403.9" width="1.6" height="1.6"/><rect x="897.1" y="403.9" width="1.6" height="1.6"/><rect x="895.6" y="405.4" width="1.6" height="1.6"/><rect x="894.1" y="406.9" width="1.6" height="1.6"/><rect x="897.1" y="406.9" width="1.6" height="1.6"/>
<path d="M906 410 L907.3 408.2 L908 408.9Z"/>
<rect x="941.6" y="405.3" width="4.6" height="4.2"/></g>
<path d="M942.4 405.3 V403.8 A1.5 1.5 0 0 1 945.4 403.8 V405.3" fill="none" stroke="#b8b8b8" stroke-width="0.7"/>
<!-- layer list -->
<rect x="873" y="414.8" width="140" height="120.7" fill="#535353"/>
<path d="M888.8 414.8 V520" stroke="#4a4a4a" stroke-width="0.7"/>
<rect x="889" y="454.8" width="124" height="20.8" fill="#666"/>
<g stroke="#474747" stroke-width="0.8"><path d="M873 427.6 H1013 M873 440.6 H1013 M873 454.6 H1013 M873 475.7 H1013 M873 497.6 H1013 M873 520 H1013"/></g>
<path d="M877.2 421.5 C879.2 418.5 883.2 418.5 885.2 421.5 C883.2 424.5 879.2 424.5 877.2 421.5Z" fill="#d0d0d0"/><circle cx="881.2" cy="421.5" r="1.5" fill="#535353"/><circle cx="881.2" cy="421.5" r="0.7" fill="#d0d0d0"/><path d="M877.2 435.2 C879.2 432.2 883.2 432.2 885.2 435.2 C883.2 438.2 879.2 438.2 877.2 435.2Z" fill="#d0d0d0"/><circle cx="881.2" cy="435.2" r="1.5" fill="#535353"/><circle cx="881.2" cy="435.2" r="0.7" fill="#d0d0d0"/><path d="M877.2 448.5 C879.2 445.5 883.2 445.5 885.2 448.5 C883.2 451.5 879.2 451.5 877.2 448.5Z" fill="#d0d0d0"/><circle cx="881.2" cy="448.5" r="1.5" fill="#535353"/><circle cx="881.2" cy="448.5" r="0.7" fill="#d0d0d0"/><path d="M877.2 466.2 C879.2 463.2 883.2 463.2 885.2 466.2 C883.2 469.2 879.2 469.2 877.2 466.2Z" fill="#d0d0d0"/><circle cx="881.2" cy="466.2" r="1.5" fill="#535353"/><circle cx="881.2" cy="466.2" r="0.7" fill="#d0d0d0"/><path d="M877.2 487.2 C879.2 484.2 883.2 484.2 885.2 487.2 C883.2 490.2 879.2 490.2 877.2 487.2Z" fill="#d0d0d0"/><circle cx="881.2" cy="487.2" r="1.5" fill="#535353"/><circle cx="881.2" cy="487.2" r="0.7" fill="#d0d0d0"/><path d="M877.2 509.2 C879.2 506.2 883.2 506.2 885.2 509.2 C883.2 512.2 879.2 512.2 877.2 509.2Z" fill="#d0d0d0"/><circle cx="881.2" cy="509.2" r="1.5" fill="#535353"/><circle cx="881.2" cy="509.2" r="0.7" fill="#d0d0d0"/>
<path d="M890.80 420.20 L893.3 422.70 L895.80 420.20" fill="none" stroke="#a8a8a8" stroke-width="0.6"/><path d="M897.3 418.10 H900.50 L901.30 418.90 H905.80 V424.50 H897.3 Z" fill="#d0d0d0"/><path d="M897.70 420.00 H905.40" stroke="#535353" stroke-width="0.6"/>
<path d="M899.00 433.90 L901.5 436.40 L904.00 433.90" fill="none" stroke="#a8a8a8" stroke-width="0.6"/><path d="M905.5 431.80 H908.70 L909.50 432.60 H914.00 V438.20 H905.5 Z" fill="#d0d0d0"/><path d="M905.90 433.70 H913.60" stroke="#535353" stroke-width="0.6"/>
<path d="M907.50 447.20 L910 449.70 L912.50 447.20" fill="none" stroke="#a8a8a8" stroke-width="0.6"/><path d="M913.8 445.10 H917.00 L917.80 445.90 H922.30 V451.50 H913.8 Z" fill="#d0d0d0"/><path d="M914.20 447.00 H921.90" stroke="#535353" stroke-width="0.6"/>
<rect x="915.5" y="456" width="19.2" height="19" fill="url(#chk2)" stroke="#e8e8e8" stroke-width="0.5"/>
<g transform="translate(925 465.5) scale(0.11) translate(-415.9 -218.4)"><path d="M392.3 226.6 L392.3 170 L398.8 170 L398.8 199.8 L452.8 176.4 L457.2 181.3 L422.8 196.6 L471.4 217.3 L439.3 211.3 L439.3 265 L433.1 265 L433.1 236 L377.9 259 L372.5 254.7 L405.8 240.1 L358.3 218.6 L358.3 211.8Z" fill="#111"/></g>
<rect x="928" y="468.5" width="5.5" height="5.5" fill="#555" stroke="#e8e8e8" stroke-width="0.5"/><rect x="929.5" y="470" width="2.5" height="2.5" fill="none" stroke="#e8e8e8" stroke-width="0.4"/>
<rect x="917" y="479.5" width="16.3" height="16.5" fill="url(#chk2)"/>
<circle cx="923.8" cy="487.2" r="5.5" fill="#dfa86a" stroke="#3a2a22" stroke-width="1"/>
<rect x="927.5" y="489.5" width="5.5" height="6" fill="#555" stroke="#e8e8e8" stroke-width="0.5"/><rect x="929" y="491" width="2.5" height="2.8" fill="none" stroke="#e8e8e8" stroke-width="0.4"/>
<rect x="891.6" y="501.2" width="16.3" height="17" fill="#fff"/>
<rect x="998.5" y="508.5" width="5.5" height="4.5" fill="none" stroke="#c8c8c8" stroke-width="0.7"/><path d="M999.5 508.5 V507 A1.75 1.75 0 0 1 1003 507 V508.5" fill="none" stroke="#c8c8c8" stroke-width="0.7"/>
<rect x="1013" y="414.8" width="7" height="120.7" fill="#4b4b4b"/>
<!-- bottom icons -->
<g fill="none" stroke="#9a9a9a" stroke-width="0.8">
<path d="M916.5 542 H914.8 A1.6 1.6 0 0 0 914.8 545.2 H916.5 M918.8 542 H920.5 A1.6 1.6 0 0 1 920.5 545.2 H918.8 M916 543.6 H919.3"/>
<rect x="943.3" y="540.8" width="6.5" height="5.5"/>
<circle cx="961" cy="543.5" r="2.6"/>
<rect x="987" y="540.5" width="5.8" height="6"/><path d="M989.9 541.8 V545.2 M988.2 543.5 H991.6"/>
<path d="M1001.3 541.5 H1005.7 M1002 542 L1002.5 547 H1004.5 L1005 542 M1002.8 540.5 H1004.2"/>
</g>
<circle cx="946.5" cy="543.5" r="1.6" fill="#9a9a9a"/>
<path d="M959.2 545.3 L962.8 541.7 A2.6 2.6 0 0 1 959.2 545.3Z" fill="#9a9a9a"/>
<path d="M972 541 H974.5 L975.2 541.8 H978.5 V546.3 H972Z" fill="#9a9a9a"/>
</svg>
<div class="t" style="left:877.5px;top:44.8px;font-size:5.6px;font-weight:bold;color:#f0f0f0">Color</div>
<div class="t" style="left:899.5px;top:44.8px;font-size:5.6px;color:#b8b8b8">Swatches</div>
<div class="t" style="left:932.5px;top:44.8px;font-size:5.6px;color:#b8b8b8">Gradients</div>
<div class="t" style="left:966px;top:44.8px;font-size:5.6px;color:#b8b8b8">Patterns</div>
<div class="t" style="left:877.5px;top:200.5px;font-size:5.6px;font-weight:bold;color:#f0f0f0">Properties</div>
<div class="t" style="left:912px;top:200.5px;font-size:5.6px;color:#b8b8b8">Libraries</div>
<div class="t" style="left:943px;top:200.5px;font-size:5.6px;color:#b8b8b8">Adjustments</div>
<div class="t" style="left:877.5px;top:218.6px;font-size:5.6px;color:#d8d8d8">No Properties</div>
<div class="t" style="left:877.5px;top:356.8px;font-size:5.6px;font-weight:bold;color:#f0f0f0">Layers</div>
<div class="t" style="left:902.5px;top:356.8px;font-size:5.6px;color:#b8b8b8">Channels</div>
<div class="t" style="left:935px;top:356.8px;font-size:5.6px;color:#b8b8b8">Paths</div>
<div class="t" style="left:886.8px;top:374.8px;font-size:5.6px;color:#7e7e7e">Kind</div>
<div class="t" style="left:879px;top:389.5px;font-size:5.8px;font-weight:bold;color:#e8e8e8">Normal</div>
<div class="t" style="left:946.8px;top:389.5px;font-size:5.6px;color:#d0d0d0">Opacity:</div>
<div class="t" style="left:971px;top:389.5px;font-size:5.6px;color:#e8e8e8">100%</div>
<div class="t" style="left:876px;top:403.8px;font-size:5.6px;color:#7a7a7a">Lock:</div>
<div class="t" style="left:958.5px;top:403.8px;font-size:5.6px;color:#d0d0d0">Fill:</div>
<div class="t" style="left:971px;top:403.8px;font-size:5.6px;color:#7a7a7a">100%</div>
<div class="t" style="left:911px;top:419px;font-size:5.6px;color:#d8d8d8">Group 1</div>
<div class="t" style="left:920px;top:432.8px;font-size:5.6px;color:#d8d8d8">&lt;Group&gt;</div>
<div class="t" style="left:929px;top:445.8px;font-size:5.6px;color:#d8d8d8">&lt;Group&gt;</div>
<div class="t" style="left:939px;top:463.6px;font-size:5.6px;color:#e8e8e8">&lt;Path&gt;</div>
<div class="t" style="left:939px;top:485.3px;font-size:5.6px;color:#d8d8d8">&lt;Ellipse&gt;</div>
<div class="t" style="left:913px;top:507.2px;font-size:5.6px;font-style:italic;color:#d8d8d8">Background</div>
<div class="t" style="left:929px;top:540.5px;font-size:6.5px;font-style:italic;color:#9a9a9a;font-family:'Liberation Serif'">fx</div>



</body></html>
